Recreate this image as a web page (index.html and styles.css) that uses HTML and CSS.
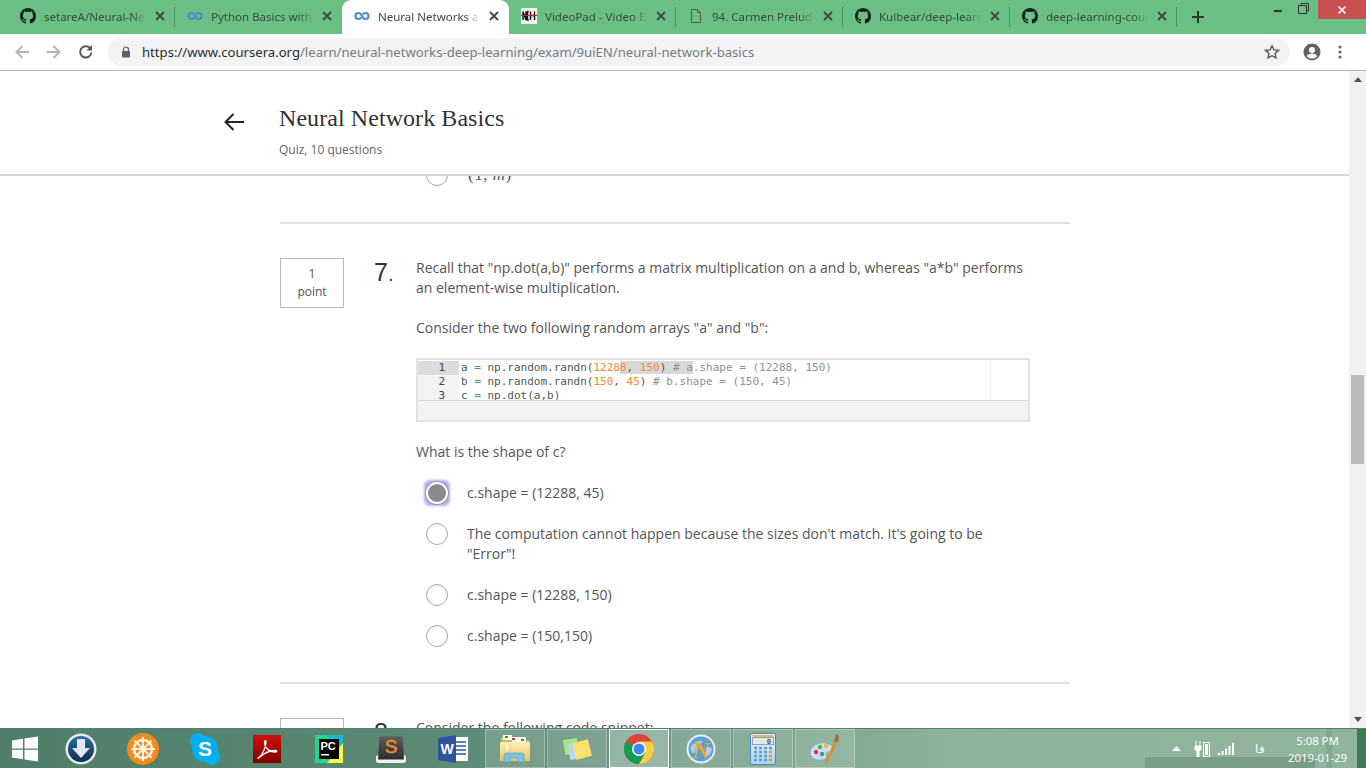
FILE: index.html
```html
<!DOCTYPE html>
<html lang="en">
<head>
<meta charset="utf-8">
<title>Neural Network Basics</title>
<link rel="stylesheet" href="styles.css">
</head>
<body>
<svg class="defs" width="0" height="0" aria-hidden="true">
  <symbol id="gh" viewBox="0 0 16 16"><path d="M8 0C3.58 0 0 3.58 0 8c0 3.54 2.29 6.53 5.47 7.59.4.07.55-.17.55-.38 0-.19-.01-.82-.01-1.49-2.01.37-2.53-.49-2.69-.94-.09-.23-.48-.94-.82-1.13-.28-.15-.68-.52-.01-.53.63-.01 1.08.58 1.23.82.72 1.21 1.87.87 2.33.66.07-.52.28-.87.51-1.07-1.78-.2-3.64-.89-3.64-3.95 0-.87.31-1.59.82-2.15-.08-.2-.36-1.02.08-2.12 0 0 .67-.21 2.2.82.64-.18 1.32-.27 2-.27s1.36.09 2 .27c1.53-1.04 2.2-.82 2.2-.82.44 1.1.16 1.92.08 2.12.51.56.82 1.27.82 2.15 0 3.07-1.87 3.75-3.65 3.95.29.25.54.73.54 1.48 0 1.07-.01 1.93-.01 2.2 0 .21.15.46.55.38A8 8 0 0 0 16 8c0-4.42-3.58-8-8-8z" fill="#1b1f23"/></symbol>
  <symbol id="co" viewBox="0 0 16 16"><path d="M8 8C7 5.800 5.800 5 4.500 5 2.800 5 1.500 6.300 1.500 8s1.300 3 3 3c1.200 0 2.100-.6 2.800-1.600M8 8c1 2.200 2.200 3 3.500 3 1.700 0 3-1.300 3-3s-1.300-3-3-3c-1.200 0-2.100.6-2.800 1.600" fill="none" stroke="#4f8ecb" stroke-width="2.200"/></symbol>
  <symbol id="x" viewBox="0 0 12 12"><path d="M2 2l8 8M10 2l-8 8" stroke="#444" stroke-width="1.800" fill="none"/></symbol>
</svg>

<header class="tabstrip">
  <div class="tab"><svg class="tab-ic"><use href="#gh"/></svg><span class="tab-t">setareA/Neural-Network</span><svg class="tab-x"><use href="#x"/></svg></div>
  <div class="tab tab-nosep"><svg class="tab-ic"><use href="#co"/></svg><span class="tab-t">Python Basics with Numpy</span><svg class="tab-x"><use href="#x"/></svg></div>
  <div class="tab tab-active"><svg class="tab-ic"><use href="#co"/></svg><span class="tab-t">Neural Networks and Deep</span><svg class="tab-x"><use href="#x"/></svg></div>
  <div class="tab"><svg class="tab-ic" viewBox="0 0 16 16"><rect width="16" height="16" fill="#f4f4ee"/><path d="M1 3h14v9H1z" fill="#fff"/><path d="M2 12V3.500l3 8.500V3.500M7.800 3.500H6.500V12h1.300M9.500 3.500V12M13.500 3.500V12M9.500 7.500h4" stroke="#111" stroke-width="1.500" fill="none"/><rect x="0" y="7" width="16" height="1" fill="#c22"/></svg><span class="tab-t">VideoPad - Video Editor</span><svg class="tab-x"><use href="#x"/></svg></div>
  <div class="tab"><svg class="tab-ic" viewBox="0 0 16 16"><path d="M3.500 1.500h6l3 3v10h-9zM9.500 1.500v3h3" fill="none" stroke="#555" stroke-width="1"/></svg><span class="tab-t">94. Carmen Prelude to Act</span><svg class="tab-x"><use href="#x"/></svg></div>
  <div class="tab"><svg class="tab-ic"><use href="#gh"/></svg><span class="tab-t">Kulbear/deep-learning-co</span><svg class="tab-x"><use href="#x"/></svg></div>
  <div class="tab"><svg class="tab-ic"><use href="#gh"/></svg><span class="tab-t">deep-learning-coursera/</span><svg class="tab-x"><use href="#x"/></svg></div>
  <svg class="newtab" viewBox="0 0 14 14"><path d="M7 1v12M1 7h12" stroke="#333" stroke-width="2" fill="none"/></svg>
  <div class="winbtns">
    <svg class="win-min" viewBox="0 0 10 10"><rect x="1" y="6" width="8" height="2" fill="#333"/></svg>
    <svg class="win-res" viewBox="0 0 11 11"><path d="M3 2.500V.500h7.500V8H8.500M.500 2.500h8v8h-8z" fill="none" stroke="#333"/></svg>
    <div class="win-close"><svg viewBox="0 0 10 10" width="10" height="10"><path d="M1.500 1.500l7 7M8.500 1.500l-7 7" stroke="#fff" stroke-width="1.600"/></svg></div>
  </div>
</header>

<nav class="toolbar">
  <svg class="nav-ic" viewBox="0 0 16 16"><path d="M15 8H2.500M8.500 2L2.500 8l6 6" fill="none" stroke="#b0b3b7" stroke-width="2"/></svg>
  <svg class="nav-ic" viewBox="0 0 16 16"><path d="M1 8h12.500M7.500 2l6 6-6 6" fill="none" stroke="#b0b3b7" stroke-width="2"/></svg>
  <svg class="nav-ic" viewBox="0 0 16 16"><path d="M13.500 8.500A5.700 5.700 0 1 1 11.800 3.800" fill="none" stroke="#55585c" stroke-width="2"/><path d="M14 1v5.500H8.500z" fill="#55585c"/></svg>
  <div class="omnibox">
    <svg class="lock" viewBox="0 0 10 12"><path d="M2.500 5V3.500a2.500 2.500 0 0 1 5 0V5" fill="none" stroke="#5f6368" stroke-width="1.200"/><rect x="1" y="5" width="8" height="6.500" rx="1" fill="#5f6368"/></svg>
    <span class="url"><span class="url-host">https://www.coursera.org</span>/learn/neural-networks-deep-learning/exam/9uiEN/neural-network-basics</span>
    <svg class="star" viewBox="0 0 16 16"><path d="M8 1.800l1.900 4.100 4.500.5-3.300 3 .9 4.500L8 11.700l-4 2.200.9-4.500-3.300-3 4.500-.5z" fill="none" stroke="#555" stroke-width="1.400"/></svg>
  </div>
  <svg class="acct" viewBox="0 0 18 18"><circle cx="9" cy="9" r="8.500" fill="#5f6368"/><circle cx="9" cy="7" r="3" fill="#fff"/><path d="M3.800 13.200c1-2 3.200-2.700 5.200-2.700s4.200.7 5.200 2.700C13 14.800 11 15.500 9 15.500s-4-.7-5.200-2.300z" fill="#fff"/></svg>
  <svg class="dots" viewBox="0 0 4 16"><circle cx="2" cy="3" r="1.500" fill="#5f6368"/><circle cx="2" cy="8" r="1.500" fill="#5f6368"/><circle cx="2" cy="13" r="1.500" fill="#5f6368"/></svg>
</nav>

<div class="viewport">
  <main class="page">
    <section class="quizhead">
      <svg class="back" viewBox="0 0 22 20"><path d="M21 10H2.500M10.500 2l-8 8 8 8" fill="none" stroke="#222" stroke-width="2"/></svg>
      <div>
        <h1 class="title">Neural Network Basics</h1>
        <p class="sub">Quiz, 10 questions</p>
      </div>
    </section>
    <div class="quiz">
      <div class="peek"><span class="radio"></span><span class="math">(1, <i>m</i>)</span></div>
      <hr class="rule">
      <article class="q">
        <div class="pts"><span>1</span><span>point</span></div>
        <div class="qnum">7<small>.</small></div>
        <div class="qbody">
          <p class="para">Recall that "np.dot(a,b)" performs a matrix multiplication on a and b, whereas "a*b" performs an element-wise multiplication.</p>
          <p class="para">Consider the two following random arrays "a" and "b":</p>
          <div class="code">
            <div class="lines">
              <div class="ln ln-cur"><span class="gut">1</span><span class="src">a <u>=</u> np.random.randn(<b>1228</b><mark><b>8</b>, <b>150</b>) <em># a</em></mark><em>.shape = (12288, 150)</em></span></div>
              <div class="ln"><span class="gut">2</span><span class="src">b <u>=</u> np.random.randn(<b>150</b>, <b>45</b>) <em># b.shape = (150, 45)</em></span></div>
              <div class="ln"><span class="gut">3</span><span class="src">c <u>=</u> np.dot(a,b)</span></div>
            </div>
            <div class="codefoot"></div>
          </div>
          <p class="para">What is the shape of c?</p>
          <div class="opts">
            <label class="opt"><span class="radio radio-on"></span><span>c.shape = (12288, 45)</span></label>
            <label class="opt"><span class="radio"></span><span>The computation cannot happen because the sizes don't match. It's going to be "Error"!</span></label>
            <label class="opt"><span class="radio"></span><span>c.shape = (12288, 150)</span></label>
            <label class="opt"><span class="radio"></span><span>c.shape = (150,150)</span></label>
          </div>
        </div>
      </article>
      <hr class="rule">
      <article class="q">
        <div class="pts"><span>1</span><span>point</span></div>
        <div class="qnum">8<small>.</small></div>
        <div class="qbody"><p class="para">Consider the following code snippet:</p></div>
      </article>
    </div>
  </main>
  <aside class="scrollbar">
    <span class="sb-up"></span>
    <div class="sb-track"><div class="sb-thumb"></div></div>
    <span class="sb-down"></span>
  </aside>
</div>

<footer class="taskbar">
  <div class="tb tb-start"><svg viewBox="0 0 26 26" width="26" height="26"><path d="M0 4.500l11-1.800V12.500H0zM12.500 2.400L26 .500V12.500H12.500zM0 13.800h11V23.300L0 21.600zM12.500 13.800H26V25.500L12.500 23.600z" fill="#fff"/></svg></div>
  <div class="tb"><svg viewBox="0 0 32 32" width="32" height="32"><defs><linearGradient id="org" x1="0" y1="0" x2="0" y2="1"><stop offset="0" stop-color="#2a6ea8"/><stop offset="1" stop-color="#0d2c4c"/></linearGradient></defs><circle cx="16" cy="16" r="15.500" fill="#e8eaea"/><circle cx="16" cy="16" r="13" fill="url(#org)"/><path d="M12 6h8v9h5L16 25 7 15h5z" fill="#e4e8ee"/></svg></div>
  <div class="tb"><svg viewBox="0 0 32 32" width="32" height="32"><circle cx="16" cy="16" r="16" fill="#f58a1f"/><circle cx="16" cy="16" r="9" fill="none" stroke="#fff3e0" stroke-width="2.500"/><circle cx="16" cy="16" r="3" fill="#fff3e0"/><path d="M16 4v24M4 16h24M7.500 7.500l17 17M24.500 7.500l-17 17" stroke="#fff3e0" stroke-width="2"/></svg></div>
  <div class="tb"><svg viewBox="0 0 30 32" width="30" height="32"><circle cx="8" cy="8" r="8" fill="#00aff0"/><circle cx="22" cy="24" r="8" fill="#00aff0"/><circle cx="15" cy="16" r="13" fill="#00aff0"/><text x="15" y="23" class="skype">S</text></svg></div>
  <div class="tb"><svg viewBox="0 0 28 28" width="28" height="28"><defs><linearGradient id="pdf" x1="0" y1="0" x2="0" y2="1"><stop offset="0" stop-color="#d01010"/><stop offset="1" stop-color="#7d0000"/></linearGradient></defs><rect width="28" height="28" fill="url(#pdf)"/><path d="M5 23c4-2 7-9 8-15 .3-3-1.500-3-1.500 0 0 4 4 9 11 9 2 0 1.500-1.800-1-1.500-4 .4-9 2-12 4.500-2.500 2-4 3.500-4.500 3z" fill="none" stroke="#fff" stroke-width="1.300"/></svg></div>
  <div class="tb"><svg viewBox="0 0 28 28" width="28" height="28"><path d="M0 0h28v28H0z" fill="#21d789"/><path d="M10 0h18v12z" fill="#14b9d6"/><path d="M28 8v20H12z" fill="#fcf84a"/><rect x="4" y="4" width="20" height="20" fill="#000"/><text x="5.500" y="15" class="pc">PC</text><rect x="6" y="19" width="8" height="1.500" fill="#fff"/></svg></div>
  <div class="tb"><svg viewBox="0 0 30 28" width="30" height="28"><defs><linearGradient id="sub" x1="0" y1="0" x2="0" y2="1"><stop offset="0" stop-color="#5c5c5c"/><stop offset="1" stop-color="#2e2e2e"/></linearGradient></defs><rect x="0" y="20" width="30" height="8" rx="2.500" fill="#f2f2f2"/><path d="M3.500 1.500h23l1.500 23h-26z" fill="url(#sub)"/><text x="15" y="18" class="subl">S</text></svg></div>
  <div class="tb"><svg viewBox="0 0 30 28" width="30" height="28"><rect x="9" y="2" width="21" height="24" fill="#fff"/><path d="M18 7h10M18 11h10M18 15h10M18 19h10" stroke="#2b579a" stroke-width="1.500"/><path d="M0 3l18-3v28L0 25z" fill="#2b579a"/><text x="9" y="19" class="word">W</text></svg></div>
  <div class="tb tb-run"><svg viewBox="0 0 32 30" width="32" height="30"><defs><linearGradient id="fold" x1="0" y1="0" x2="0" y2="1"><stop offset="0" stop-color="#fbeeb4"/><stop offset="1" stop-color="#e8c466"/></linearGradient></defs><path d="M2 3h12l2 3h14v6H2z" fill="#d8b65c"/><path d="M4 1h9v5H4zM13 3h14v6H13z" fill="#fbfbf0"/><rect x="6" y="2" width="3" height="2" fill="#2a2"/><rect x="13" y="4" width="3" height="2" fill="#c33"/><rect x="22" y="5" width="3" height="2" fill="#28c"/><path d="M1 8h30v19H1z" fill="url(#fold)"/><path d="M5 28v-7a2 2 0 0 1 2-2h16a2 2 0 0 1 2 2v7h-6v-4h-8v4z" fill="#7cc4e4" stroke="#4d9cc4" stroke-width=".6"/><path d="M7 13l1 5 1-5-1-5z" fill="#fff"/></svg></div>
  <div class="tb tb-run"><svg viewBox="0 0 32 30" width="32" height="30"><rect x="3" y="5" width="14" height="15" transform="rotate(-10 10 12)" fill="#a8e48c"/><rect x="8" y="9" width="15" height="16" transform="rotate(-8 15 17)" fill="#bcd8f4"/><rect x="13" y="7" width="16" height="17" transform="rotate(-14 21 15)" fill="#fbe26e"/></svg></div>
  <div class="tb tb-run tb-focus"><svg viewBox="0 0 30 30" width="30" height="30"><circle cx="15" cy="15" r="15" fill="#db4437"/><path d="M15 15L2 7.500A15 15 0 0 0 15 30l6.500-11.300z" fill="#0f9d58"/><path d="M15 7.500h13A15 15 0 0 1 15 30l6.500-11.300z" fill="#ffcd40"/><circle cx="15" cy="15" r="7" fill="#fff"/><circle cx="15" cy="15" r="5.500" fill="#4285f4"/></svg></div>
  <div class="tb tb-run"><svg viewBox="0 0 30 30" width="30" height="30"><circle cx="15" cy="15" r="14.500" fill="#e8eef2"/><circle cx="15" cy="15" r="12.500" fill="#5d9fd6"/><path d="M5 12c4-5 8-6 12-5-2 3-6 3-5 6s-3 7-5 6-3-4-2-7zM19 14c3-1 6-1 7 1-1 4-3 7-6 8-1-3 0-6-1-9z" fill="#a6d0ee"/><text x="15" y="24" class="napp">N</text></svg></div>
  <div class="tb tb-run"><svg viewBox="0 0 26 32" width="26" height="32"><defs><linearGradient id="cal" x1="0" y1="0" x2="0" y2="1"><stop offset="0" stop-color="#eaf4fb"/><stop offset="1" stop-color="#a8d4ee"/></linearGradient></defs><rect x="0.500" y="0.500" width="25" height="31" rx="1.500" fill="url(#cal)" stroke="#4a8cc0"/><rect x="2.500" y="2" width="21" height="2.500" fill="#f0b050"/><rect x="2.500" y="4.500" width="21" height="7" fill="#dfe8ef" stroke="#8aa"/><text x="21" y="10.500" class="calc">0</text><path d="M4 15h3M9 15h3M14 15h3M19 15h3M4 19h3M9 19h3M14 19h3M4 23h3M9 23h3M14 23h3M4 27h3M9 27h3M14 27h3" stroke="#6a9cc4" stroke-width="2.400"/><path d="M19 19h3M19 23h3M19 27h3" stroke="#e89a30" stroke-width="2.400"/></svg></div>
  <div class="tb tb-run"><svg viewBox="0 0 32 32" width="32" height="32"><path d="M1 20c0-7 8-11 15-10 6 .8 9 4 7 7-1.500 2.500-5 1-6 3-1 2 2 4-1 6-5 3-15 0-15-6z" fill="#c8e0f4" stroke="#8aaccb"/><circle cx="7" cy="19" r="2.200" fill="#d8384a"/><circle cx="11" cy="14" r="2.200" fill="#4cb848"/><circle cx="17" cy="13" r="2.200" fill="#e8c030"/><circle cx="13" cy="21" r="2.200" fill="#5a8a9a"/><path d="M17 30L27 8" stroke="#e88a18" stroke-width="2.500"/><path d="M25 8l2-7 3 2-1 6z" fill="#9a7248"/></svg></div>
  <div class="tray">
    <svg class="tray-up" viewBox="0 0 9 5"><path d="M4.500 0L9 5H0z" fill="#fff"/></svg>
    <svg class="tray-pow" viewBox="0 0 16 16"><path d="M1 5h6v3.500L5 10.500V16H3v-5.500L1 8.500zM2 5V0M6 5V0" stroke="#fff" stroke-width="1" fill="#fff"/><rect x="9.500" y="1.500" width="6" height="14" fill="none" stroke="#fff"/><rect x="11" y="3" width="3" height="11" fill="#fff"/></svg>
    <svg class="tray-net" viewBox="0 0 16 12"><path d="M0 10h2v2H0zM3.500 8h2v4h-2zM7 5.500h2V12H7zM10.500 3h2v9h-2zM14 0h2v12h-2z" fill="#fff"/></svg>
    <span class="tray-lang">فا</span>
    <div class="clock"><span>5:08 PM</span><span>2019-01-29</span></div>
  </div>
  <div class="ghost ghost-rect"></div>
  <div class="ghost ghost-bar"></div>
  <div class="ghost ghost-edge"></div>
</footer>
</body>
</html>
```
FILE: styles.css
```css
* { box-sizing: border-box; }
html, body { margin: 0; padding: 0; height: 768px; overflow: hidden; }
body { display: flex; flex-direction: column; background: #fff; font-family: "Open Sans", sans-serif; color: #555; }
.defs { position: absolute; }

.tabstrip { height: 34px; flex: none; display: flex; align-items: stretch; padding-left: 8px; background: #69bf84; }
.tab { width: 167px; display: flex; align-items: center; padding: 0 9px 2px 12px; gap: 8px; background: linear-gradient(#4f8f63, #4f8f63) right center / 1px 20px no-repeat; }
.tab-nosep { background: none; }
.tab-active { background: #fff; border-radius: 9px 9px 0 0; }
.tab-ic { width: 16px; height: 16px; flex: none; }
.tab-t { flex: 1; min-width: 0; white-space: nowrap; overflow: hidden; font-family: "Noto Sans", sans-serif; font-size: 11.500px; color: #3c4a40; -webkit-mask-image: linear-gradient(90deg, #000 86%, transparent 100%); mask-image: linear-gradient(90deg, #000 86%, transparent 100%); }
.tab-active .tab-t { color: #444; }
.tab-x { width: 12px; height: 12px; flex: none; }
.newtab { width: 14px; height: 14px; align-self: center; margin-left: 14px; }
.winbtns { margin-left: auto; display: flex; align-items: flex-start; height: 19px; }
.win-min { width: 10px; height: 10px; margin: 4px 15px 0 0; }
.win-res { width: 11px; height: 11px; margin: 3px 9px 0 0; }
.win-close { width: 48px; height: 19px; background: #c75050; display: flex; align-items: center; justify-content: center; }

.toolbar { height: 37px; flex: none; display: flex; align-items: center; padding: 0 0 0 14px; background: #fff; border-bottom: 1px solid #b5b5b5; }
.nav-ic { width: 16px; height: 16px; margin-right: 16px; flex: none; }
.nav-ic:nth-child(3) { margin-right: 14px; }
.omnibox { width: 1182px; height: 28px; border-radius: 14px; background: #f1f3f4; display: flex; align-items: center; padding: 0 10px 0 13px; }
.lock { width: 10px; height: 12px; flex: none; }
.url { margin-left: 11px; font-family: "Noto Sans", sans-serif; font-size: 13.140px; color: #747b80; white-space: nowrap; flex: 1; }
.url-host { color: #2a2a2a; }
.star { width: 16px; height: 16px; flex: none; }
.acct { width: 18px; height: 18px; margin-left: 13px; flex: none; }
.dots { width: 4px; height: 16px; margin-left: 17px; flex: none; }

.viewport { flex: 1; min-height: 0; display: flex; }
.page { flex: 1; min-width: 0; overflow: hidden; }
.quizhead { position: relative; z-index: 2; height: 105px; background: #fff; border-bottom: 2px solid #d4d4d4; display: flex; padding: 31px 0 0 223px; gap: 34px; }
.back { width: 22px; height: 20px; margin-top: 10px; flex: none; }
.title { margin: 0; font-family: "Liberation Serif", serif; font-weight: 400; font-size: 24px; line-height: 32px; color: #333; letter-spacing: .07px; }
.sub { margin: 8px 0 0; font-size: 12px; line-height: 16px; color: #666; }

.quiz { width: 790px; margin: -12px 0 0 280px; }
.peek { display: flex; align-items: center; height: 22px; padding-left: 146px; gap: 20px; margin-bottom: 36px; }
.math { font-family: "Liberation Serif", serif; font-size: 17px; line-height: 22px; letter-spacing: .5px; }
.rule { margin: 0; border: 0; height: 2px; background: #e1e1e1; }
.q { display: flex; padding: 34px 0; }
.q + .rule { margin-top: 2px; }
.pts { width: 64px; height: 50px; flex: none; border: 1px solid #b8b8b8; display: flex; flex-direction: column; align-items: center; justify-content: center; font-size: 12px; line-height: 18px; color: #555; }
.qnum { width: 72px; padding-left: 30px; flex: none; font-family: "Liberation Sans", sans-serif; font-size: 25px; line-height: 28px; color: #333; }
.qnum small { font-size: 20px; }
.qbody { width: 614px; font-size: 14px; line-height: 20px; }
.para { margin: 0 0 20px; }
.code { border: 2px solid #e2e2e2; margin-bottom: 20px; background: #fff; }
.lines { height: 41px; padding-top: 1px; overflow: hidden; border-bottom: 1px solid #dcdcdc; background: linear-gradient(#eee, #eee) 572px 0 / 1px 100% no-repeat; font-family: "DejaVu Sans Mono", monospace; font-size: 11px; line-height: 14px; }
.ln { display: flex; height: 14px; }
.gut { width: 41px; flex: none; text-align: right; padding-right: 14px; background: #f3f3f3; color: #444; }
.ln-cur .gut { background: #dcdcdc; }
.src { padding-left: 2px; white-space: pre; color: #555; }
.src b { font-weight: 400; color: #f58a2e; }
.src u { text-decoration: none; color: #3a9a90; }
.src em { font-style: normal; color: #909090; }
.src mark { background: #d8d8d8; color: inherit; }
.codefoot { height: 19px; background: #f3f3f3; }
.opts { display: flex; flex-direction: column; gap: 21px; margin-top: 21px; }
.opt { display: flex; align-items: flex-start; gap: 19px; padding: 0 40px 0 10px; }
.radio { position: relative; width: 22px; height: 22px; flex: none; margin: -1px 0; border-radius: 50%; border: 1px solid #a9a9a9; background: #fff; box-shadow: inset 0 1px 2px rgba(0, 0, 0, .08); }
.peek .radio { margin: 0; }
.radio-on { background: #8a8a8a; border: 2px solid #fff; box-shadow: 0 0 0 1px #9a9a9a; }
.radio-on::before { content: ""; position: absolute; inset: -4px; z-index: -1; border-radius: 6px; background: #aab2f5; filter: blur(1px); }

.scrollbar { width: 17px; flex: none; background: #f1f1f1; display: flex; flex-direction: column; align-items: center; }
.sb-up, .sb-down { flex: none; width: 0; height: 0; margin: 6px 0; border-left: 4px solid transparent; border-right: 4px solid transparent; }
.sb-up { border-bottom: 5px solid #505050; }
.sb-down { border-top: 5px solid #505050; }
.sb-track { flex: 1; width: 100%; padding: 287px 2px 0; }
.sb-thumb { height: 89px; background: #bbb; }

.taskbar { position: relative; height: 40px; flex: none; display: flex; align-items: center; background: linear-gradient(90deg, #4f7f6a 0, #5a8872 30%, #6f9a84 50%, #8fb39b 70%, #90b49c 100%); border-top: 1px solid #54806b; }
.tb { position: relative; z-index: 1; width: 62px; height: 39px; flex: none; display: flex; align-items: center; justify-content: center; }
.tb-start { width: 50px; }
.tb-run { width: 60px; margin: 0 1px; background: rgba(255, 255, 255, .14); border: 1px solid rgba(255, 255, 255, .3); }
.tb-focus { background: rgba(255, 255, 255, .3); border-color: #fff; }
.skype { font: 700 21px "Liberation Sans", sans-serif; fill: #fff; text-anchor: middle; }
.pc { font: 700 11px "Liberation Sans", sans-serif; fill: #fff; }
.subl { font: 400 19px "Liberation Sans", sans-serif; fill: #f5942b; stroke: #f5942b; stroke-width: .4px; text-anchor: middle; }
.word { font: 700 14px "Liberation Sans", sans-serif; fill: #fff; text-anchor: middle; }
.napp { font: italic 700 24px "Liberation Serif", serif; fill: #f5a623; text-anchor: middle; }
.calc { font: 700 7px "DejaVu Sans Mono", monospace; fill: #555; text-anchor: end; }
.tray { position: relative; z-index: 1; margin-left: auto; display: flex; align-items: center; height: 39px; color: #fff; padding-right: 19px; }
.tray-up { width: 9px; height: 5px; margin-right: 13px; }
.tray-pow { width: 16px; height: 16px; margin-right: 8px; }
.tray-net { width: 16px; height: 12px; margin-right: 21px; }
.tray-lang { font-family: "Noto Sans", sans-serif; font-size: 12px; margin-right: 23px; }
.clock { display: flex; flex-direction: column; align-items: center; font-family: "Noto Sans", sans-serif; font-size: 11.500px; line-height: 17px; letter-spacing: -.1px; }
.ghost { position: absolute; bottom: 0; }
.ghost-rect { left: 1145px; width: 170px; height: 11px; background: #789c85; }
.ghost-bar { left: 1326px; width: 6px; height: 39px; background: #83a890; }
.ghost-edge { left: 1357px; width: 9px; height: 39px; background: #3f7b55; }
```
